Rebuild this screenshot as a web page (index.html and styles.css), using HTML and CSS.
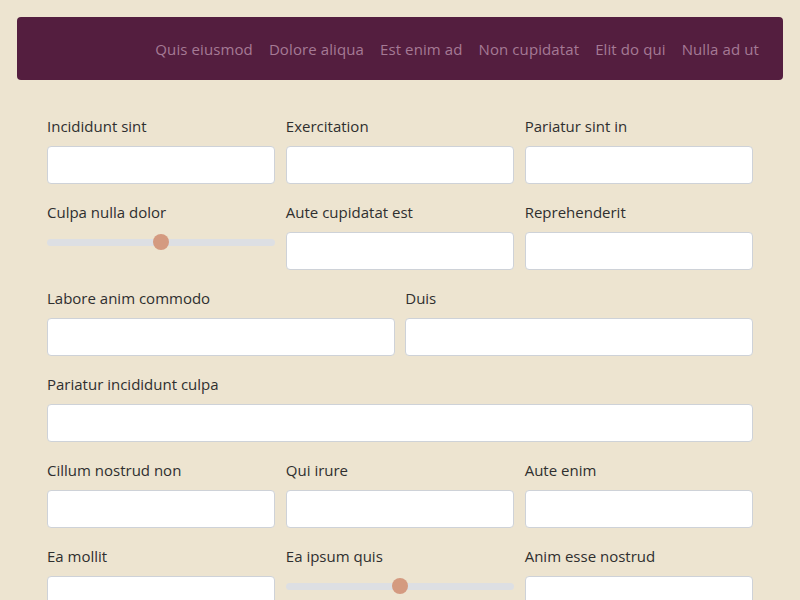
FILE: index.html
```html
<!DOCTYPE html>
<html lang="en">
<head>
<meta charset="utf-8">
<title>Form</title>
<link rel="stylesheet" href="styles.css">
</head>
<body>
<header class="topbar">
  <nav class="nav">
    <a href="#">Quis eiusmod</a>
    <a href="#">Dolore aliqua</a>
    <a href="#">Est enim ad</a>
    <a href="#">Non cupidatat</a>
    <a href="#">Elit do qui</a>
    <a href="#">Nulla ad ut</a>
  </nav>
</header>
<form class="form">
  <div class="row cols-3">
    <label class="field"><span class="label">Incididunt sint</span><input class="input" type="text"></label>
    <label class="field"><span class="label">Exercitation</span><input class="input" type="text"></label>
    <label class="field"><span class="label">Pariatur sint in</span><input class="input" type="text"></label>
  </div>
  <div class="row cols-3">
    <label class="field"><span class="label">Culpa nulla dolor</span><input class="range" type="range" min="0" max="100" value="50"></label>
    <label class="field"><span class="label">Aute cupidatat est</span><input class="input" type="text"></label>
    <label class="field"><span class="label">Reprehenderit</span><input class="input" type="text"></label>
  </div>
  <div class="row cols-2">
    <label class="field"><span class="label">Labore anim commodo</span><input class="input" type="text"></label>
    <label class="field"><span class="label">Duis</span><input class="input" type="text"></label>
  </div>
  <div class="row cols-1">
    <label class="field"><span class="label">Pariatur incididunt culpa</span><input class="input" type="text"></label>
  </div>
  <div class="row cols-3">
    <label class="field"><span class="label">Cillum nostrud non</span><input class="input" type="text"></label>
    <label class="field"><span class="label">Qui irure</span><input class="input" type="text"></label>
    <label class="field"><span class="label">Aute enim</span><input class="input" type="text"></label>
  </div>
  <div class="row cols-3">
    <label class="field"><span class="label">Ea mollit</span><input class="input" type="text"></label>
    <label class="field"><span class="label">Ea ipsum quis</span><input class="range" type="range" min="0" max="100" value="50"></label>
    <label class="field"><span class="label">Anim esse nostrud</span><input class="input" type="text"></label>
  </div>
</form>
</body>
</html>
```
FILE: styles.css
```css
* { box-sizing: border-box; }
html, body { margin: 0; }
body {
  background: #ede4d0;
  padding: 17px;
  font-family: "Open Sans", "Noto Sans", sans-serif;
  font-size: 15px;
  color: #2f2f2f;
}
.topbar {
  background: #541e3f;
  border-radius: 4px;
  height: 63px;
  display: flex;
  align-items: center;
  justify-content: flex-end;
  padding: 0 24px;
}
.nav {
  display: flex;
  gap: 16px;
}
.nav a {
  color: #a57a95;
  text-decoration: none;
  font-size: 15px;
  letter-spacing: 0.1px;
  line-height: 20px;
}
.form {
  padding: 36px 30px 0;
  display: flex;
  flex-direction: column;
  gap: 18px;
}
.row {
  display: grid;
  gap: 10.5px;
}
.cols-3 { grid-template-columns: repeat(3, 1fr); }
.cols-2 { grid-template-columns: repeat(2, 1fr); }
.cols-1 { grid-template-columns: 1fr; }
.field {
  display: flex;
  flex-direction: column;
  gap: 8px;
  min-width: 0;
}
.label {
  line-height: 20px;
  height: 22px;
  white-space: nowrap;
}
.input {
  height: 38px;
  width: 100%;
  background: #ffffff;
  border: 1px solid #ced2d8;
  border-radius: 4px;
  margin: 0;
  font: inherit;
}
.range {
  -webkit-appearance: none;
  appearance: none;
  width: 100%;
  height: 20px;
  margin: 0;
  background: transparent;
}
.range::-webkit-slider-runnable-track {
  height: 7px;
  background: #dddfe3;
  border-radius: 4px;
}
.range::-webkit-slider-thumb {
  -webkit-appearance: none;
  appearance: none;
  width: 16px;
  height: 16px;
  border-radius: 50%;
  background: #d49a80;
  border: none;
  margin-top: -4.5px;
}
.range::-moz-range-track {
  height: 7px;
  background: #dddfe3;
  border-radius: 4px;
}
.range::-moz-range-thumb {
  width: 16px;
  height: 16px;
  border-radius: 50%;
  background: #d49a80;
  border: none;
}
```
